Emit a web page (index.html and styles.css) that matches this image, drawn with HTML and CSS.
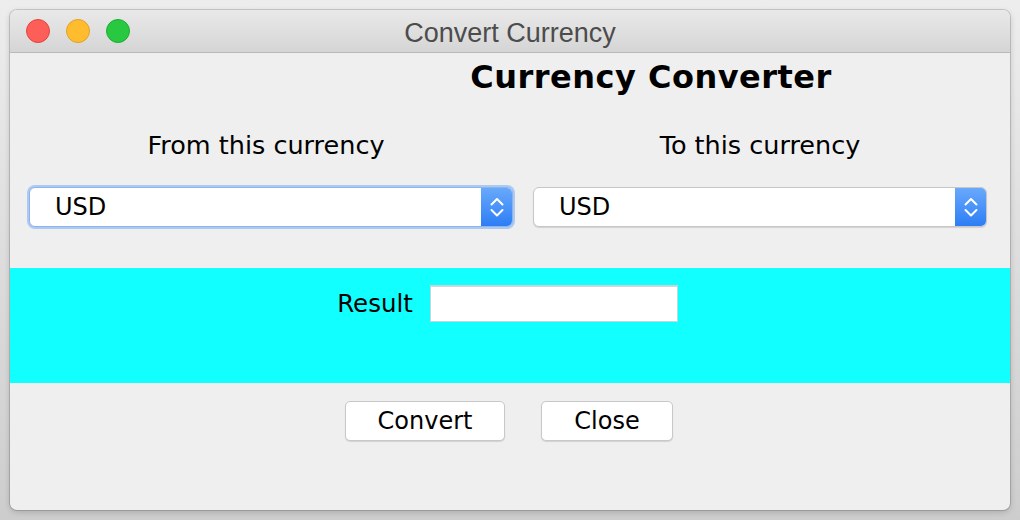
FILE: index.html
```html
<!DOCTYPE html>
<html>
<head>
<meta charset="utf-8">
<link rel="stylesheet" href="styles.css">
</head>
<body>
<div class="window">
  <div class="titlebar">
    <div class="lights">
      <span class="light red"></span>
      <span class="light yellow"></span>
      <span class="light green"></span>
    </div>
    <div class="title">Convert Currency</div>
    <div></div>
  </div>
  <div class="content">
    <div class="heading">Currency Converter</div>
    <div class="columns">
      <div class="col col-left">
        <div class="label">From this currency</div>
        <div class="combo focused">
          <span class="combo-text">USD</span>
          <span class="combo-arrow">
            <svg width="32" height="40" viewBox="0 0 32 40"><path d="M10.5 17.5 L16 12 L21.5 17.5 M10.5 23 L16 28.5 L21.5 23" fill="none" stroke="#fff" stroke-width="2" stroke-linecap="round" stroke-linejoin="round"/></svg>
          </span>
        </div>
      </div>
      <div class="col col-right">
        <div class="label">To this currency</div>
        <div class="combo">
          <span class="combo-text">USD</span>
          <span class="combo-arrow">
            <svg width="32" height="40" viewBox="0 0 32 40"><path d="M10.5 17.5 L16 12 L21.5 17.5 M10.5 23 L16 28.5 L21.5 23" fill="none" stroke="#fff" stroke-width="2" stroke-linecap="round" stroke-linejoin="round"/></svg>
          </span>
        </div>
      </div>
    </div>
    <div class="result-band">
      <div class="result-row">
        <span class="result-label">Result</span>
        <span class="result-field"></span>
      </div>
    </div>
    <div class="buttons">
      <button class="btn btn-convert">Convert</button>
      <button class="btn btn-close">Close</button>
    </div>
  </div>
</div>
</body>
</html>
```

FILE: styles.css
```css
* { box-sizing: border-box; }
html, body { margin: 0; padding: 0; }
body {
  width: 1020px;
  height: 520px;
  padding: 10px;
  background: linear-gradient(#ededed, #cdcdcd);
  font-family: "DejaVu Sans", "Liberation Sans", sans-serif;
  color: #000;
  overflow: hidden;
}
.window {
  width: 1000px;
  height: 500px;
  border-radius: 7px;
  background: #efefef;
  box-shadow: 0 0 0 1px rgba(0,0,0,0.14), 0 2px 6px rgba(0,0,0,0.18);
  overflow: hidden;
  display: flex;
  flex-direction: column;
}
.titlebar {
  height: 43px;
  flex: none;
  display: grid;
  grid-template-columns: 1fr auto 1fr;
  align-items: center;
  background: linear-gradient(#e9e9e9, #d5d5d5);
  border-bottom: 1px solid #b9b9b9;
}
.lights {
  display: flex;
  gap: 16px;
  padding-left: 16px;
  padding-bottom: 1px;
}
.light {
  width: 24px;
  height: 24px;
  border-radius: 50%;
  display: block;
}
.red { background: #fd5e57; border: 1px solid #e2463f; }
.yellow { background: #febc2e; border: 1px solid #e0a126; }
.green { background: #28c840; border: 1px solid #1eae30; }
.title {
  font-family: "Liberation Sans", Arial, sans-serif;
  font-size: 27px;
  color: #4c4c4c;
  padding-top: 4px;
}
.content {
  flex: 1;
  display: flex;
  flex-direction: column;
}
.heading {
  height: 50px;
  padding-top: 6px;
  padding-left: 282px;
  text-align: center;
  font-weight: bold;
  font-size: 32px;
  letter-spacing: 0.5px;
  line-height: 36px;
}
.columns {
  display: grid;
  grid-template-columns: 484px 454px;
  column-gap: 20px;
  padding-left: 19px;
  margin-top: 27px;
}
.col {
  display: flex;
  flex-direction: column;
}
.label {
  text-align: center;
  font-size: 25.5px;
  line-height: 30px;
  height: 30px;
}
.col-left .label {
  padding-right: 10px;
}
.combo {
  margin-top: 27px;
  height: 40px;
  display: flex;
  align-items: center;
  background: #fff;
  border: 1px solid #c6c6c6;
  border-radius: 6px;
  box-shadow: 0 1px 1px rgba(0,0,0,0.12);
  overflow: hidden;
}
.combo.focused {
  border-color: #8ab4ee;
  box-shadow: 0 0 0 2px rgba(120,170,240,0.55);
}
.combo-text {
  flex: 1;
  padding-left: 25px;
  font-size: 24px;
  line-height: 30px;
}
.combo-arrow {
  width: 32px;
  height: 40px;
  flex: none;
  margin: -1px -1px -1px 0;
  background: linear-gradient(#6aaafc, #2b7df5);
  display: flex;
}
.result-band {
  margin-top: 41px;
  height: 115px;
  background: #12ffff;
  padding-top: 17px;
}
.result-row {
  display: flex;
  align-items: center;
  justify-content: center;
  gap: 17px;
  padding-right: 5px;
}
.result-label {
  font-size: 24.5px;
  line-height: 30px;
}
.result-field {
  width: 248px;
  height: 37px;
  background: #fff;
  border: 1px solid #bfd8d8;
  box-shadow: inset 0 1px 0 #d6d6d6;
}
.buttons {
  margin-top: 18px;
  display: flex;
  justify-content: center;
  gap: 36px;
  padding-right: 2px;
}
.btn {
  height: 40px;
  background: #fff;
  border: 1px solid #c8c8c8;
  border-radius: 5px;
  box-shadow: 0 1px 1px rgba(0,0,0,0.12);
  font-family: "DejaVu Sans", "Liberation Sans", sans-serif;
  font-size: 24px;
  color: #000;
  padding: 0;
}
.btn-convert { width: 160px; }
.btn-close { width: 132px; }
```
